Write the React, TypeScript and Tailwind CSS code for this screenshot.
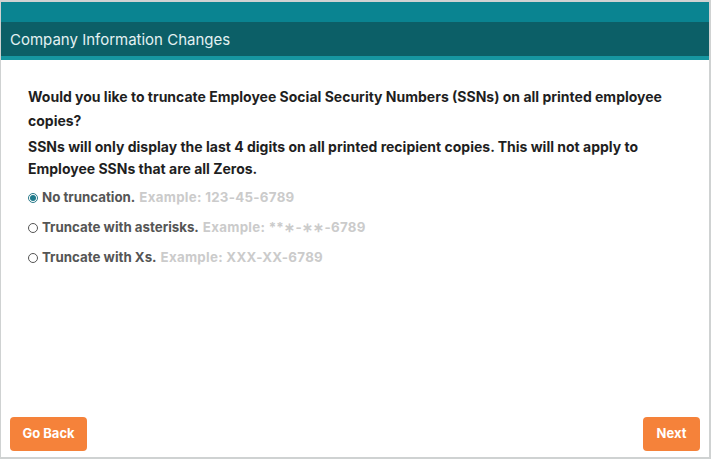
import { useState } from "react";

const options = [
  { id: "none", label: "No truncation.", example: "Example: 123-45-6789" },
  { id: "asterisks", label: "Truncate with asterisks.", example: "Example: **\u2217-\u2217\u2217-6789" },
  { id: "xs", label: "Truncate with Xs.", example: "Example: XXX-XX-6789" },
];

export default function App() {
  const [choice, setChoice] = useState("none");

  return (
    <div
      className="flex h-[459px] w-[711px] flex-col overflow-hidden border-t-2 border-r-2 border-b-2 border-l border-[#cfd2d2] bg-white"
      style={{ fontFamily: "Inter, 'Liberation Sans', sans-serif" }}
    >
      <div className="h-[20px] bg-[#0a8491]" />
      <div className="flex h-[34px] items-center bg-[#0c5f67] px-[9px] pt-[2px] text-[15px] text-[#e3f1f2]">
        Company Information Changes
      </div>
      <div className="h-[4px] bg-[#1696a1]" />

      <div className="flex-1 px-[27px] pt-[25px]">
        <p className="text-[14px] leading-[24px] font-bold text-[#1f1f1f]">
          Would you like to truncate Employee Social Security Numbers (SSNs) on all printed employee copies?
        </p>
        <p className="mt-[3px] text-[14px] leading-[22px] font-bold text-[#1f1f1f]">
          SSNs will only display the last 4 digits on all printed recipient copies. This will not apply to
          Employee SSNs that are all Zeros.
        </p>
        <div className="mt-[8px] flex flex-col gap-[10px]">
          {options.map((o) => (
            <label key={o.id} className="flex h-[20px] cursor-pointer items-center gap-[4px] text-[13.3px] font-bold">
              <span
                className={
                  choice === o.id
                    ? "flex h-[10px] w-[10px] items-center justify-center rounded-full border border-[#2a7a8a]"
                    : "flex h-[10px] w-[10px] items-center justify-center rounded-full border border-[#555]"
                }
                onClick={() => setChoice(o.id)}
              >
                {choice === o.id ? <span className="h-[6px] w-[6px] rounded-full bg-[#1f7b8c]" /> : null}
              </span>
              <span className="text-[#555]" onClick={() => setChoice(o.id)}>{o.label}</span>
              <span className="tracking-[0.3px] text-[#cbcbcb]">{o.example}</span>
            </label>
          ))}
        </div>
      </div>

      <div className="flex items-center justify-between px-[9px] pb-[6px]">
        <button
          type="button"
          className="h-[34px] w-[77px] rounded-[4px] bg-[#f5823a] text-[13px] font-bold text-white"
        >
          Go Back
        </button>
        <button
          type="button"
          className="h-[34px] w-[57px] rounded-[4px] bg-[#f5823a] text-[13px] font-bold text-white"
        >
          Next
        </button>
      </div>
    </div>
  );
}
